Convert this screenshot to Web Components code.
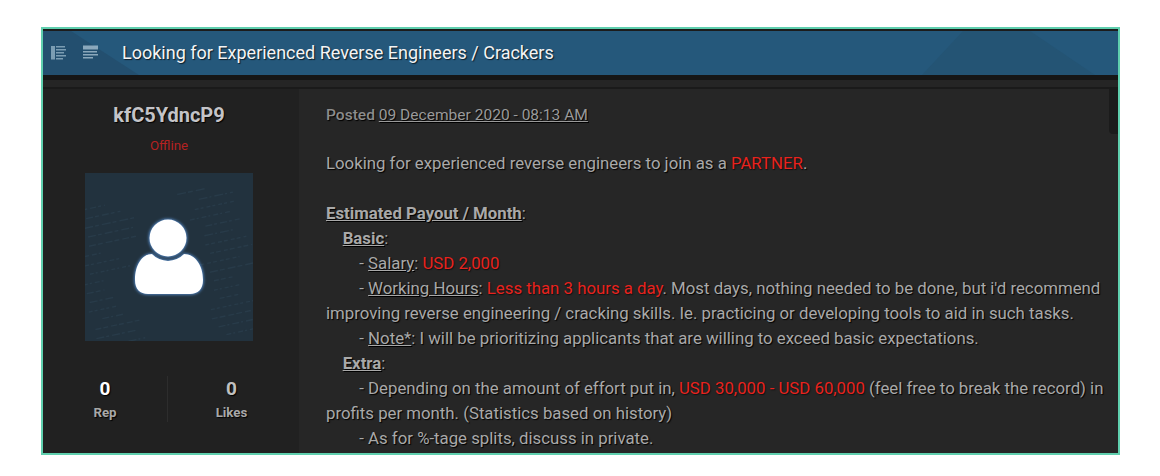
<!DOCTYPE html>
<html>
<head>
<meta charset="utf-8">
<title>Thread</title>
<style>
    html, body { margin: 0; background: #fff; }
    body { font-family: Roboto, "Liberation Sans", sans-serif; padding: 27px 40px 21px 41px; }
</style>
</head>
<body>
<thread-view>
    <thread-header slot="header" title-text="Looking for Experienced Reverse Engineers / Crackers"></thread-header>
    <post-author slot="side" name="kfC5YdncP9" status="Offline" rep="0" likes="0"></post-author>
    <post-body slot="main" date="09 December 2020 - 08:13 AM">
        <p-line class="gap">Looking for experienced reverse engineers to join as a <r-t>PARTNER</r-t>.</p-line>
        <p-line><b><u>Estimated Payout / Month</u></b>:</p-line>
        <p-line>&nbsp;&nbsp;&nbsp;&nbsp;<b><u>Basic</u></b>:</p-line>
        <p-line>&nbsp;&nbsp;&nbsp;&nbsp;&nbsp;&nbsp;&nbsp;&nbsp;- <u>Salary</u>: <r-t>USD 2,000</r-t></p-line>
        <p-line>&nbsp;&nbsp;&nbsp;&nbsp;&nbsp;&nbsp;&nbsp;&nbsp;- <u>Working Hours</u>: <r-t>Less than 3 hours a day</r-t>. Most days, nothing needed to be done, but i'd recommend<br>improving reverse engineering / cracking skills. Ie. practicing or developing tools to aid in such tasks.</p-line>
        <p-line>&nbsp;&nbsp;&nbsp;&nbsp;&nbsp;&nbsp;&nbsp;&nbsp;- <u>Note*</u>: I will be prioritizing applicants that are willing to exceed basic expectations.</p-line>
        <p-line>&nbsp;&nbsp;&nbsp;&nbsp;<b><u>Extra</u></b>:</p-line>
        <p-line>&nbsp;&nbsp;&nbsp;&nbsp;&nbsp;&nbsp;&nbsp;&nbsp;- Depending on the amount of effort put in, <r-t>USD 30,000 - USD 60,000</r-t> (feel free to break the record) in<br>profits per month. (Statistics based on history)</p-line>
        <p-line>&nbsp;&nbsp;&nbsp;&nbsp;&nbsp;&nbsp;&nbsp;&nbsp;- As for %-tage splits, discuss in private.</p-line>
    </post-body>
</thread-view>

<script>
    class ThreadView extends HTMLElement {
        constructor() {
            super();
            this.attachShadow({ mode: "open" }).innerHTML = `
            <style>
                :host {
                    display: flex;
                    flex-direction: column;
                    box-sizing: border-box;
                    width: 1079px;
                    height: 428px;
                    border: 2px solid #5fcfae;
                    background: #262626;
                    overflow: hidden;
                }
                .strip {
                    flex: none;
                    height: 7px;
                    margin-top: 5px;
                    background: #252525;
                    box-shadow: 0 -5px 0 #161616;
                    border-bottom: 2px solid #1a1a1a;
                }
                .post {
                    flex: 1;
                    display: flex;
                    min-height: 0;
                }
            </style>
            <slot name="header"></slot>
            <div class="strip"></div>
            <div class="post">
                <slot name="side"></slot>
                <slot name="main"></slot>
            </div>`;
        }
    }

    class ThreadHeader extends HTMLElement {
        constructor() {
            super();
            this.attachShadow({ mode: "open" }).innerHTML = `
            <style>
                :host {
                    display: block;
                    flex: none;
                    border-top: 2px solid #1c1c1c;
                    position: relative;
                    height: 44px;
                    background: #25587b;
                    overflow: hidden;
                }
                .bg { position: absolute; left: 0; top: 0; }
                .row {
                    position: relative;
                    display: flex;
                    align-items: center;
                    height: 44px;
                    padding-left: 8px;
                }
                svg.ic { width: 16px; height: 16px; margin-right: 16px; flex: none; opacity: .72; filter: blur(.35px); }
                h1 {
                    margin: 0 0 0 7px;
                    font: 400 18px/44px Roboto, sans-serif;
                    color: #f4f4f4;
                    text-shadow: 1px 1px 1px #0c1c28;
                }
            </style>
            <svg class="bg" width="1075" height="44">
                <polygon points="0,0 28,0 96,44 0,44" fill="#234f6f"/>
                <polygon points="920,0 987,0 1052,44 879,44" fill="#245474"/>
            </svg>
            <div class="row">
                <svg class="ic" viewBox="0 0 16 16" fill="#9dbbce">
                    <rect x="0" y="1" width="4" height="13.5"/>
                    <rect x="5" y="1" width="9" height="1.5"/>
                    <rect x="5" y="4" width="10" height="1.5"/>
                    <rect x="5" y="7" width="8" height="1.5"/>
                    <rect x="5" y="10" width="10" height="1.5"/>
                    <rect x="5" y="13" width="7" height="1.5"/>
                </svg>
                <svg class="ic" viewBox="0 0 16 16" fill="#b4cbda">
                    <rect x="0" y="0.5" width="15" height="4"/>
                    <rect x="0" y="6" width="14" height="1.5"/>
                    <rect x="0" y="9" width="15" height="1.5"/>
                    <rect x="0" y="12" width="10" height="1.5"/>
                </svg>
                <h1></h1>
            </div>`;
            this.shadowRoot.querySelector("h1").textContent = this.getAttribute("title-text");
        }
    }

    class PostAuthor extends HTMLElement {
        constructor() {
            super();
            // faint code texture of the default avatar
            let lines = "";
            let seed = 7;
            function rnd(n) {
                seed = (seed * 137 + 59) % 1009;
                return seed % n;
            }
            for (let i = 0; i < 34; i++) {
                let left = i % 2 === 0;
                let x = left ? rnd(16) - 6 : 104 + rnd(24);
                let y = 20 + i * 4.6;
                let len = 18 + rnd(34);
                lines += `<path d="M${x} ${y}h${len}" stroke="#283b49" stroke-width="1.4" stroke-dasharray="${4 + rnd(6)} 2 ${2 + rnd(5)} 3"/>`;
            }
            this.attachShadow({ mode: "open" }).innerHTML = `
            <style>
                :host {
                    display: flex;
                    flex-direction: column;
                    align-items: center;
                    flex: none;
                    box-sizing: border-box;
                    width: 256px;
                    background: #212121;
                    padding-top: 14px;
                    padding-right: 4px;
                    font-family: Roboto, sans-serif;
                    text-shadow: 1px 1px 1px #000;
                }
                .name { font-size: 20px; font-weight: 700; line-height: 24px; color: #c4c4c8; }
                .status { font-size: 13.3px; line-height: 16px; margin-top: 11px; color: #b52222; text-shadow: none; }
                svg.avatar { display: block; width: 168px; height: 168px; margin-top: 19px; }
                .stats { display: flex; align-self: stretch; margin-top: 35px; }
                .stat { text-align: center; height: 46px; width: 124px; }
                .stat + .stat { border-left: 1px solid #2d2d2d; width: 127px; }
                .num { font-size: 19px; font-weight: 700; line-height: 24px; margin-top: 1px; color: #fff; }
                .stat + .stat .num { color: #c0c0c0; }
                .lbl { font-size: 13.3px; font-weight: 700; line-height: 21px; margin-top: 1px; color: #a8a8a8; }
            </style>
            <div class="name"></div>
            <div class="status"></div>
            <svg class="avatar" viewBox="0 0 168 168">
                <defs>
                    <filter id="glow" x="-20%" y="-20%" width="140%" height="140%">
                        <feGaussianBlur stdDeviation="1.4"/>
                    </filter>
                </defs>
                <rect width="168" height="168" fill="#22323e"/>
                <g transform="rotate(-12 84 84)">${lines}</g>
                <g fill="#5b93d6" stroke="#5b93d6" stroke-width="1.2" filter="url(#glow)">
                    <circle cx="83" cy="65" r="18.5"/>
                    <path d="M67 81 A22 22 0 0 0 99 81 C110 81 118 92 118 107 C118 116 113 121 105 121 H63 C55 121 50 116 50 107 C50 92 57 81 67 81Z"/>
                </g>
                <circle cx="83" cy="65" r="18.5" fill="#fff"/>
                <path d="M67 81 A22 22 0 0 0 99 81 C110 81 118 92 118 107 C118 116 113 121 105 121 H63 C55 121 50 116 50 107 C50 92 57 81 67 81Z" fill="#fff"/>
            </svg>
            <div class="stats">
                <div class="stat"><div class="num" id="rep"></div><div class="lbl">Rep</div></div>
                <div class="stat"><div class="num" id="likes"></div><div class="lbl">Likes</div></div>
            </div>`;
            let s = this.shadowRoot;
            s.querySelector(".name").textContent = this.getAttribute("name");
            s.querySelector(".status").textContent = this.getAttribute("status");
            s.getElementById("rep").textContent = this.getAttribute("rep");
            s.getElementById("likes").textContent = this.getAttribute("likes");
        }
    }

    class PostBody extends HTMLElement {
        constructor() {
            super();
            this.attachShadow({ mode: "open" }).innerHTML = `
            <style>
                :host {
                    display: block;
                    position: relative;
                    flex: 1;
                    min-width: 0;
                    box-sizing: border-box;
                    padding: 16px 10px 0 27px;
                    font-family: Roboto, sans-serif;
                    font-size: 16.8px;
                    line-height: 25px;
                    color: #a9a9a9;
                    text-shadow: 1px 1px 1px #000;
                }
                .posted { font-size: 15.55px; line-height: 20px; margin-bottom: 26px; color: #8c8c8c; font-weight: 500; }
                .posted u { color: #9a9a9a; font-weight: 400; }
                .thumb {
                    position: absolute;
                    right: 0;
                    top: 0;
                    width: 9px;
                    height: 45px;
                    background: #1b1b1b;
                    border-bottom-left-radius: 4px;
                }
            </style>
            <div class="thumb"></div>
            <div class="posted">Posted <u></u></div>
            <slot></slot>`;
            this.shadowRoot.querySelector("u").textContent = this.getAttribute("date");
        }
    }

    class PLine extends HTMLElement {
        constructor() {
            super();
            this.attachShadow({ mode: "open" }).innerHTML = `
            <style>
                :host { display: block; white-space: nowrap; }
                :host(.gap) { margin-bottom: 25px; }
            </style>
            <slot></slot>`;
        }
    }

    class RedText extends HTMLElement {
        constructor() {
            super();
            this.attachShadow({ mode: "open" }).innerHTML = `
            <style>
                :host { display: inline; color: #e8231e; text-shadow: 1px 1px 1px #111; }
            </style>
            <slot></slot>`;
        }
    }

    customElements.define("thread-view", ThreadView);
    customElements.define("thread-header", ThreadHeader);
    customElements.define("post-author", PostAuthor);
    customElements.define("post-body", PostBody);
    customElements.define("p-line", PLine);
    customElements.define("r-t", RedText);
</script>
</body>
</html>
